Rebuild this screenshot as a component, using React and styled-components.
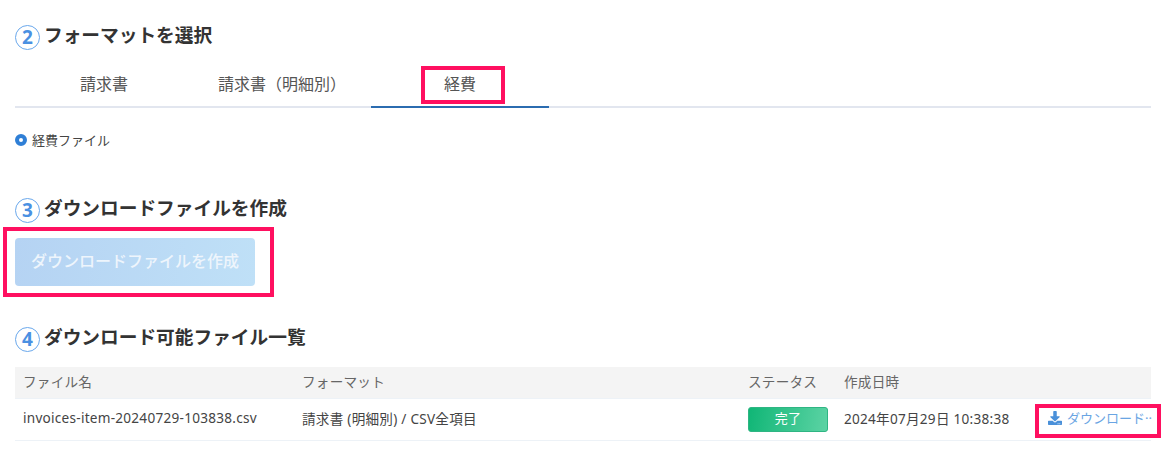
import React from 'react';
import styled, { createGlobalStyle } from 'styled-components';
import { FaDownload } from 'react-icons/fa';

const GlobalStyle = createGlobalStyle`
  html, body {
    margin: 0;
    background: #fff;
    font-family: 'Noto Sans', 'Noto Sans CJK JP', sans-serif;
    color: #333;
  }
`;

const tabs = [
  { label: '請求書' },
  { label: '請求書（明細別）' },
  { label: '経費', active: true, marked: true },
];

const App = () => (
  <Page>
    <GlobalStyle />
    <Section>
      <Heading>
        <StepNumber>2</StepNumber>
        <HeadingText>フォーマットを選択</HeadingText>
      </Heading>
      <TabList>
        {tabs.map((tab) => (
          <Tab key={tab.label} $active={tab.active}>
            {tab.label}
            {tab.marked && <TabMark />}
          </Tab>
        ))}
      </TabList>
      <RadioRow>
        <RadioDot />
        経費ファイル
      </RadioRow>
    </Section>

    <Section $top={47}>
      <Heading>
        <StepNumber>3</StepNumber>
        <HeadingText>ダウンロードファイルを作成</HeadingText>
      </Heading>
      <CreateButton disabled>
        ダウンロードファイルを作成
        <ButtonMark />
      </CreateButton>
    </Section>

    <Section $top={40}>
      <Heading>
        <StepNumber>4</StepNumber>
        <HeadingText>ダウンロード可能ファイル一覧</HeadingText>
      </Heading>
      <Table>
        <thead>
          <tr>
            <HeadCell $width={279}>ファイル名</HeadCell>
            <HeadCell $width={446}>フォーマット</HeadCell>
            <HeadCell $width={96}>ステータス</HeadCell>
            <HeadCell $width={204}>作成日時</HeadCell>
            <HeadCell />
          </tr>
        </thead>
        <tbody>
          <tr>
            <BodyCell>invoices-item-20240729-103838.csv</BodyCell>
            <BodyCell>請求書 (明細別) / CSV全項目</BodyCell>
            <StatusCell>
              <StatusBadge>完了</StatusBadge>
            </StatusCell>
            <BodyCell>2024年07月29日 10:38:38</BodyCell>
            <ActionCell>
              <DownloadLink href="#">
                <DownloadIcon />
                <DownloadText>ダウンロード··</DownloadText>
              </DownloadLink>
              <LinkMark />
            </ActionCell>
          </tr>
        </tbody>
      </Table>
    </Section>
  </Page>
);

export default App;

const Page = styled.div`
  width: 1136px;
  height: 432px;
  padding: 24px 15px 0;
  overflow: hidden;
`;

const Section = styled.section`
  margin-top: ${(props) => props.$top || 0}px;
`;

const Heading = styled.h2`
  display: flex;
  align-items: center;
  gap: 4px;
  height: 26px;
  margin: 0;
  font-size: 18.7px;
  font-weight: 700;
  line-height: 26px;
  color: #333;
`;

const HeadingText = styled.span`
  position: relative;
  top: -2px;
`;

const StepNumber = styled.span`
  display: flex;
  align-items: center;
  justify-content: center;
  width: 25px;
  height: 25px;
  border: 1px solid #6aa8ec;
  border-radius: 50%;
  box-sizing: border-box;
  font-size: 19px;
  font-weight: 700;
  color: #4a90e2;
`;

const TabList = styled.div`
  display: flex;
  height: 38px;
  margin-top: 18px;
  border-bottom: 2px solid #e2e6ef;
`;

const Tab = styled.div`
  position: relative;
  width: 178px;
  height: 40px;
  box-sizing: border-box;
  border-bottom: 2px solid ${(props) => (props.$active ? '#2b6cb0' : 'transparent')};
  font-size: 16px;
  line-height: 32px;
  text-align: center;
  color: #555;
`;

const TabMark = styled.span`
  position: absolute;
  left: 50px;
  top: -2px;
  width: 76px;
  height: 30px;
  border: 4px solid #ff1060;
`;

const RadioRow = styled.div`
  display: flex;
  align-items: center;
  gap: 5px;
  margin-top: 22px;
  font-size: 13px;
  line-height: 20px;
  color: #444;
`;

const RadioDot = styled.span`
  width: 4px;
  height: 4px;
  border: 4px solid #2f7fd6;
  border-radius: 50%;
  background: #fff;
`;

const CreateButton = styled.button`
  position: relative;
  display: block;
  width: 240px;
  height: 48px;
  margin-top: 15px;
  padding: 0 0 4px;
  border: 0;
  border-radius: 4px;
  background: linear-gradient(100deg, #b5d3f3, #bfe0f7);
  font-family: inherit;
  font-size: 16px;
  font-weight: 500;
  color: #eef5fc;
`;

const ButtonMark = styled.span`
  position: absolute;
  left: -12px;
  top: -11px;
  width: 263px;
  height: 62px;
  border: 4px solid #ff1060;
`;

const Table = styled.table`
  width: 1136px;
  margin-top: 15px;
  border-collapse: collapse;
  table-layout: fixed;
  font-size: 13.6px;
  letter-spacing: 0.25px;
`;

const HeadCell = styled.th`
  width: ${(props) => (props.$width ? `${props.$width}px` : 'auto')};
  height: 31px;
  padding: 0 8px 3px;
  box-sizing: border-box;
  background: #f4f4f4;
  font-weight: 400;
  text-align: left;
  color: #666;
  border-bottom: 1px solid #edf2f7;
`;

const BodyCell = styled.td`
  height: 42px;
  padding: 0 8px 3px;
  box-sizing: border-box;
  color: #444;
  white-space: nowrap;
  border-bottom: 1px solid #edf2f7;
`;

const StatusCell = styled(BodyCell)`
  padding-bottom: 0;
`;

const ActionCell = styled(BodyCell)`
  position: relative;
  overflow: visible;
`;

const StatusBadge = styled.span`
  display: block;
  width: 80px;
  height: 25px;
  box-sizing: border-box;
  border: 1px solid #2fb583;
  border-radius: 3px;
  background: linear-gradient(100deg, #10b676, #5cd3a4);
  font-size: 13px;
  line-height: 21px;
  text-align: center;
  color: #fff;
`;

const DownloadLink = styled.a`
  display: flex;
  align-items: center;
  gap: 5px;
  color: #4a90d9;
  text-decoration: none;
`;

const DownloadIcon = styled(FaDownload)`
  flex: none;
  width: 14px;
  height: 14px;
`;

const DownloadText = styled.span`
  flex: none;
  font-size: 13px;
  letter-spacing: 0;
  white-space: nowrap;
  color: #6aa5e3;
`;

const LinkMark = styled.span`
  position: absolute;
  left: -5px;
  top: 5px;
  width: 118px;
  height: 26px;
  border: 4px solid #ff1060;
`;
